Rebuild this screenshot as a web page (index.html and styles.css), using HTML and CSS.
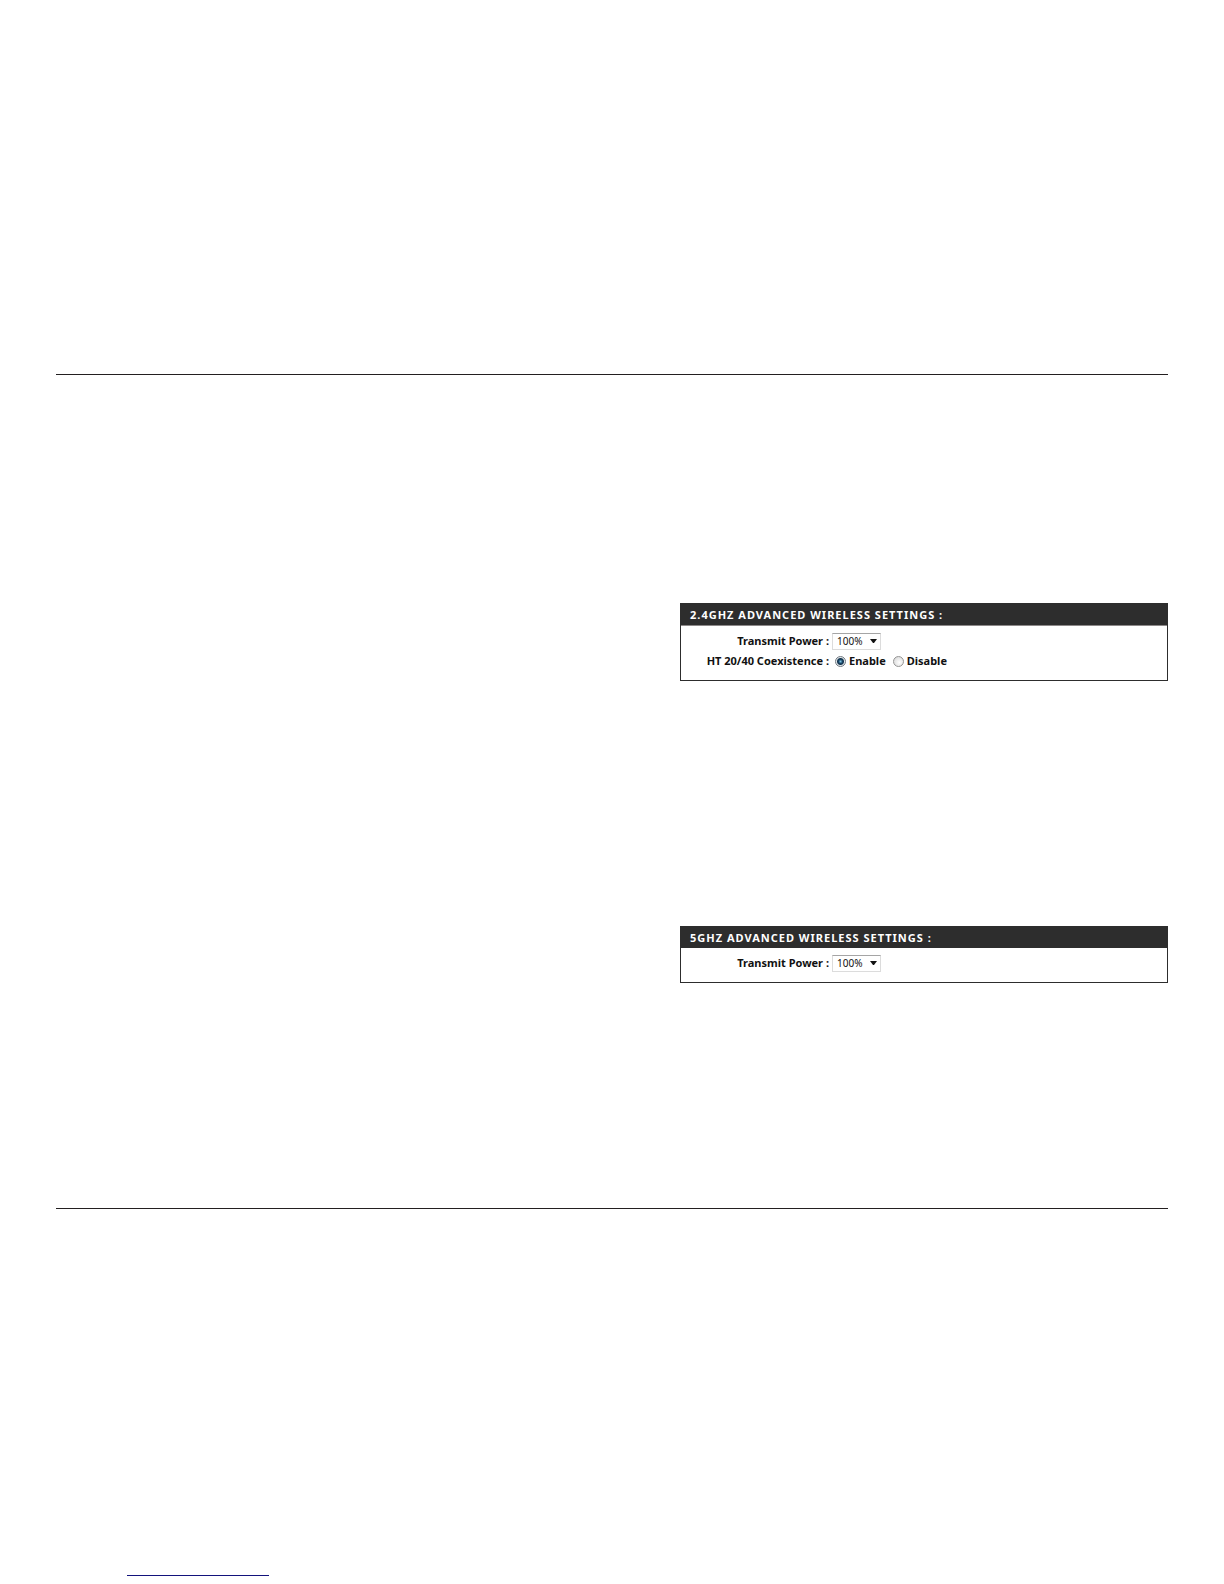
FILE: index.html
```html
<!DOCTYPE html>
<html lang="en">
<head>
<meta charset="utf-8">
<title>Advanced Wireless Settings</title>
<link rel="stylesheet" href="styles.css">
</head>
<body>
<main class="page">
  <div class="content">
    <form class="panel">
      <h2 class="panel-title">2.4GHZ ADVANCED WIRELESS SETTINGS :</h2>
      <div class="panel-body divided">
        <div class="row">
          <label class="row-label" for="power24">Transmit Power :</label>
          <select class="power" id="power24"><option>100%</option></select>
        </div>
        <div class="row" role="radiogroup" aria-labelledby="coexistence">
          <span class="row-label" id="coexistence">HT 20/40 Coexistence :</span>
          <div class="options">
            <label class="option"><input class="radio" type="radio" name="coexist" checked>Enable</label>
            <label class="option"><input class="radio" type="radio" name="coexist">Disable</label>
          </div>
        </div>
      </div>
    </form>
    <form class="panel">
      <h2 class="panel-title">5GHZ ADVANCED WIRELESS SETTINGS :</h2>
      <div class="panel-body">
        <div class="row">
          <label class="row-label" for="power5">Transmit Power :</label>
          <select class="power" id="power5"><option>100%</option></select>
        </div>
      </div>
    </form>
  </div>
</main>
<footer class="footer"><div class="footer-rule"></div></footer>
</body>
</html>
```
FILE: styles.css
```css
* { box-sizing: border-box; }

body {
  margin: 0;
  background: #fff;
  color: #111;
  font: bold 11px/20px "Noto Sans", sans-serif;
}

.page { padding: 374px 56px 0; }

.content {
  display: flex;
  flex-direction: column;
  align-items: flex-end;
  gap: 245px;
  padding: 228px 0 225px;
  border-top: 1px solid #231f20;
  border-bottom: 1px solid #231f20;
}

.panel {
  width: 488px;
  max-width: 100%;
  border: 1px solid #2d2d2d;
}

.panel-title {
  margin: 0;
  padding: 0 9px;
  background: #2d2d2d;
  color: #fff;
  font-size: 11px;
  line-height: 21px;
  letter-spacing: 1px;
}

.panel-body { padding: 5px 0 9px; }

.divided { border-top: 1px solid #8c8888; }

.row {
  display: flex;
  align-items: center;
  gap: 3px;
  height: 20px;
}

.row-label {
  width: 148px;
  text-align: right;
  white-space: nowrap;
}

.power {
  appearance: none;
  width: 49px;
  height: 17px;
  padding: 0 4px;
  border: 1px solid #dcdcdc;
  border-top-color: #a5a5a5;
  border-radius: 0;
  background: #fff url("data:image/svg+xml,%3Csvg xmlns='http://www.w3.org/2000/svg' width='7' height='4'%3E%3Cpath d='M0 0h7L4 4H3z' fill='%23111'/%3E%3C/svg%3E") no-repeat right 3px center;
  color: #111;
  font: 10px/15px "Noto Sans", sans-serif;
}

.options {
  display: flex;
  gap: 7px;
  padding-left: 3px;
}

.option {
  display: flex;
  align-items: center;
  gap: 3px;
}

.radio {
  appearance: none;
  width: 11px;
  height: 11px;
  margin: 0;
  border: 1px solid #959595;
  border-radius: 50%;
  background: radial-gradient(circle at 60% 60%, #fff, #d2d2d2);
}

.radio:checked {
  border-color: #707880;
  background: radial-gradient(circle at 50% 50%, #7cc4e4 0, #174465 2px, #17344d 3px, #e2e8ec 4px);
}

.footer { padding: 366px 127px 8px; }

.footer-rule {
  width: 142px;
  border-top: 1px solid #13137c;
}
```
